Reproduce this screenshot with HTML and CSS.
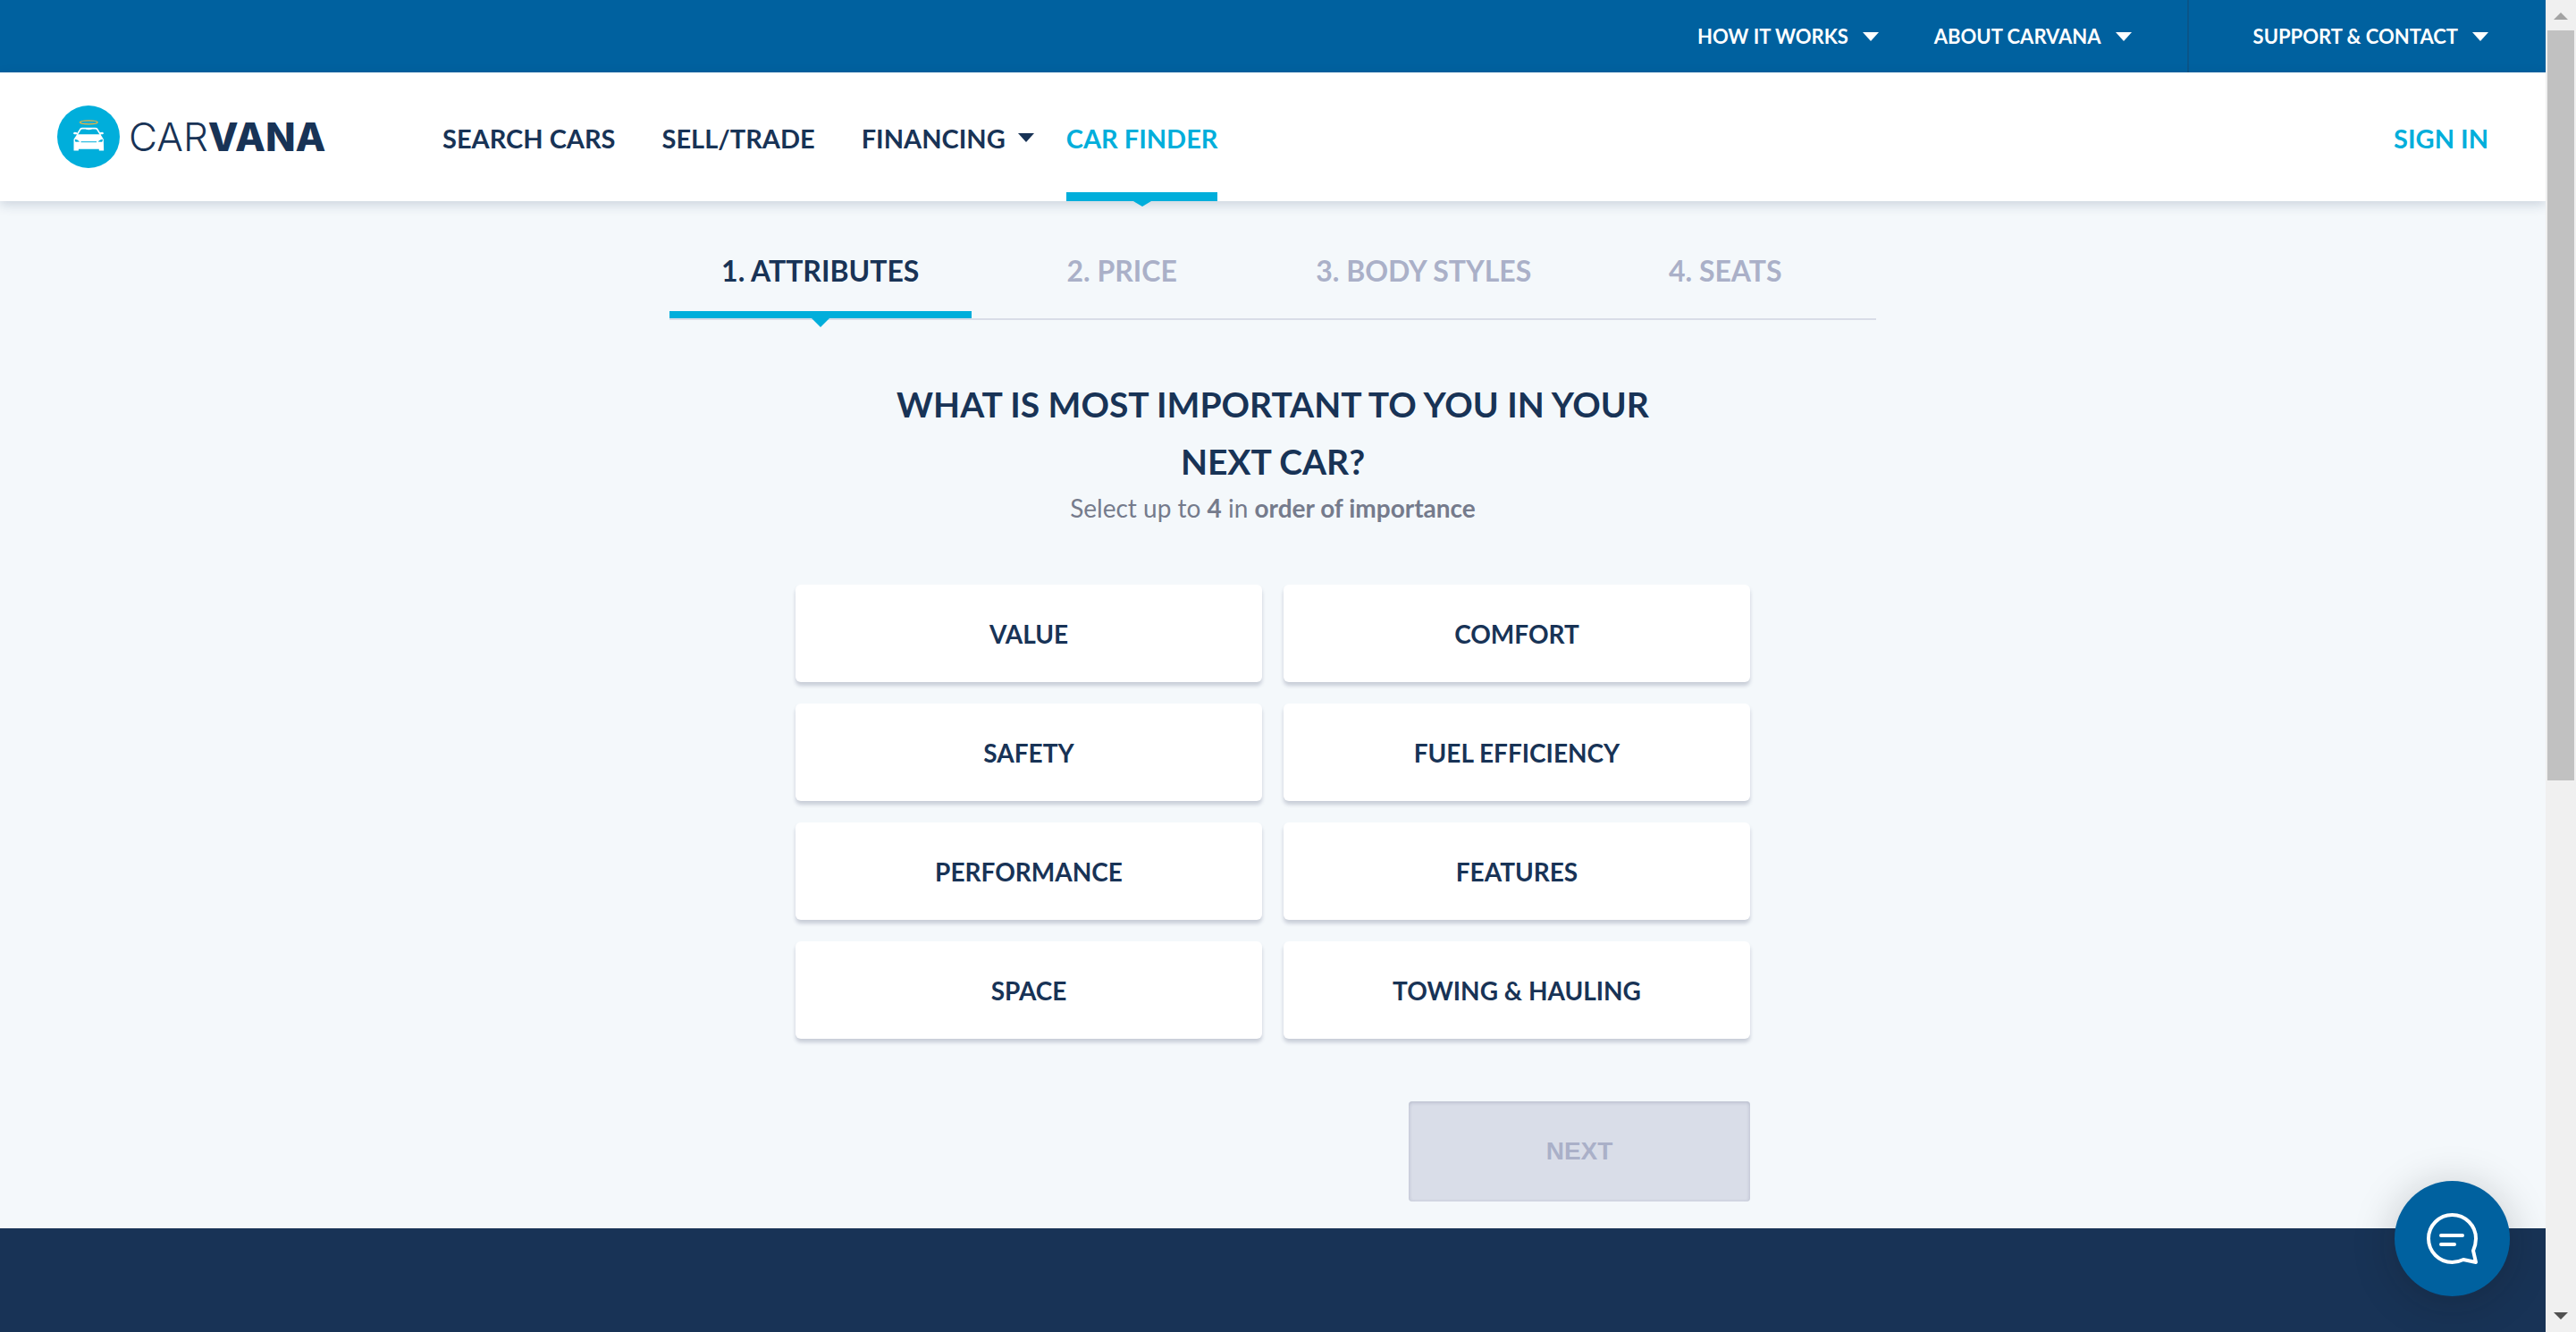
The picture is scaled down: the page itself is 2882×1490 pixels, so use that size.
FILE: index.html
```html
<!DOCTYPE html>
<html lang="en">
<head>
  <meta charset="utf-8">
  <title>Car Finder | Carvana</title>
  <meta name="viewport" content="width=device-width, initial-scale=1">
  <link rel="stylesheet" href="styles.css">
</head>
<body>
  <div class="page">
    <nav class="topbar" aria-label="Company">
      <a class="topbar-link" href="#how">HOW IT WORKS <span class="caret"></span></a>
      <a class="topbar-link" href="#about">ABOUT CARVANA <span class="caret"></span></a>
      <a class="topbar-link topbar-support" href="#support">SUPPORT &amp; CONTACT <span class="caret"></span></a>
    </nav>

    <header class="header">
      <a class="logo" href="#home">
        <svg class="logo-mark" viewBox="0 0 208 208" aria-hidden="true">
          <circle cx="104" cy="104" r="104" fill="#00aedb"/>
          <ellipse cx="105" cy="56" rx="29" ry="6" fill="none" stroke="#f2b33d" stroke-width="4"/>
          <path d="M66 97 L77 79 Q79 76 84 76 H126 Q131 76 133 79 L144 97" fill="none" stroke="#fff" stroke-width="5"/>
          <path d="M95 75h20v4q-10 4-20 0z" fill="#fff"/>
          <path d="M54 91q2-4 12-1l1 5q-8 2-13-1zM154 91q-2-4-12-1l-1 5q8 2 13-1z" fill="#fff"/>
          <path d="M66 96H144L154 112 155 150H139V145H71V150H55V112Z" fill="#fff"/>
          <path d="M59 112q8 0 16 8l-14 1q-3-4-2-9zM151 112q-8 0-16 8l14 1q3-4 2-9z" fill="#00aedb"/>
          <path d="M79 121H131" stroke="#00aedb" stroke-width="3"/>
        </svg>
        <span class="logo-text"><span class="logo-light">CAR</span><span class="logo-heavy">VANA</span></span>
      </a>
      <nav class="main-nav" aria-label="Main">
        <a class="nav-link" href="#search">SEARCH CARS</a>
        <a class="nav-link" href="#sell">SELL/TRADE</a>
        <a class="nav-link nav-menu" href="#financing">FINANCING <span class="caret"></span></a>
        <a class="nav-link nav-current" href="#finder" aria-current="page">CAR FINDER</a>
      </nav>
      <a class="sign-in" href="#sign-in">SIGN IN</a>
    </header>

    <main class="finder">
      <ol class="steps">
        <li class="step step-current" aria-current="step">1. ATTRIBUTES</li>
        <li class="step">2. PRICE</li>
        <li class="step">3. BODY STYLES</li>
        <li class="step">4. SEATS</li>
      </ol>
      <section class="question">
        <h1 class="question-title">WHAT IS MOST IMPORTANT TO YOU IN YOUR NEXT CAR?</h1>
        <p class="question-hint">Select up to <b>4</b> in <b>order of importance</b></p>
        <div class="options">
          <button class="option" type="button">VALUE</button>
          <button class="option" type="button">COMFORT</button>
          <button class="option" type="button">SAFETY</button>
          <button class="option" type="button">FUEL EFFICIENCY</button>
          <button class="option" type="button">PERFORMANCE</button>
          <button class="option" type="button">FEATURES</button>
          <button class="option" type="button">SPACE</button>
          <button class="option" type="button">TOWING &amp; HAULING</button>
        </div>
        <button class="next" type="button" disabled>NEXT</button>
      </section>
    </main>

    <footer class="footer"></footer>
  </div>

  <div class="scrollbar" aria-hidden="true">
    <span class="scroll-arrow scroll-up"></span>
    <span class="scroll-track"><span class="scroll-thumb"></span></span>
    <span class="scroll-arrow scroll-down"></span>
  </div>

  <button class="chat" type="button" aria-label="Chat with us">
    <svg class="chat-icon" viewBox="0 0 58 58" fill="none" stroke="#fff" stroke-width="4" stroke-linecap="round" stroke-linejoin="round" aria-hidden="true">
      <path d="M41 52Q35 55 28.500 55A26.500 26.500 0 1 1 55 28.500Q55 35 52 42L55 55Z"/>
      <path d="M16 25H40M16 35H31"/>
    </svg>
  </button>
</body>
</html>
```
FILE: styles.css
```css
:root {
  --blue: #00619f;
  --cyan: #00aedb;
  --navy: #183356;
  --muted: #aab0c8;
  --line: #d9dde8;
  --surface: #f4f8fb;
}

* {
  box-sizing: border-box;
}

body {
  margin: 0;
  display: flex;
  min-height: 100vh;
  background: var(--surface);
  color: var(--navy);
  font-family: Lato, "Liberation Sans", sans-serif;
  font-size: 28px;
  font-weight: 700;
}

a {
  color: inherit;
  text-decoration: none;
}

button {
  font: inherit;
  border: 0;
}

.page {
  flex: 1;
  min-width: 0;
  display: flex;
  flex-direction: column;
}

.caret {
  border: 9px solid transparent;
  border-top: 10px solid currentColor;
  border-bottom: 0;
}

/* Top bar */
.topbar {
  display: flex;
  justify-content: flex-end;
  height: 81px;
  padding-right: 64px;
  background: var(--blue);
  color: #fff;
  font-size: 22px;
}

.topbar-link {
  display: flex;
  align-items: center;
  gap: 16px;
  margin-left: 62px;
}

.topbar-support {
  padding-left: 72px;
  border-left: 2px solid #0a5589;
}

/* Header */
.header {
  position: relative;
  display: flex;
  align-items: stretch;
  height: 144px;
  padding: 0 64px;
  background: #fff;
  box-shadow: 0 4px 12px rgba(24, 51, 86, 0.18);
  font-size: 29px;
}

.logo {
  display: flex;
  align-items: center;
  gap: 10px;
  width: 431px;
}

.logo-mark {
  width: 70px;
  height: 70px;
}

.logo-text {
  font-family: Inter, "Liberation Sans", sans-serif;
  font-size: 44px;
}

.logo-light {
  font-weight: 300;
}

.logo-heavy {
  font-weight: 800;
}

.main-nav {
  display: flex;
  gap: 52px;
}

.nav-link,
.sign-in {
  display: flex;
  align-items: center;
  gap: 14px;
  padding-top: 2px;
}

.nav-menu {
  margin-right: -16px;
}

.nav-current {
  position: relative;
  color: var(--cyan);
}

.nav-current::before {
  content: "";
  position: absolute;
  inset: auto 0 0;
  height: 10px;
  background: var(--cyan);
}

.nav-current::after,
.step-current::after {
  content: "";
  position: absolute;
  top: 100%;
  left: 50%;
  margin-left: -10px;
  border: 10px solid transparent;
  border-top-color: var(--cyan);
  border-bottom: 0;
}

.nav-current::after {
  border-top-width: 6px;
}

.sign-in {
  margin-left: auto;
  color: var(--cyan);
}

/* Steps */
.finder {
  padding: 44px 24px 30px;
}

.steps {
  display: grid;
  grid-template-columns: repeat(4, 1fr);
  max-width: 1350px;
  margin: 0 auto;
  padding: 0;
  list-style: none;
  border-bottom: 2px solid var(--line);
  color: var(--muted);
  font-size: 32px;
  line-height: 68px;
  text-align: center;
}

.step {
  position: relative;
  padding-bottom: 11px;
  border-bottom: 8px solid transparent;
}

.step-current {
  color: var(--navy);
  border-color: var(--cyan);
}

.step-current::after {
  margin-top: 8px;
}

/* Question */
.question {
  max-width: 1068px;
  margin: 0 auto;
  padding-top: 62px;
  text-align: center;
}

.question-title {
  max-width: 900px;
  margin: 0 auto;
  font-size: 39px;
  line-height: 64px;
}

.question-hint {
  margin: 0;
  color: #757b8c;
  font-weight: 400;
  line-height: 40px;
}

.options {
  display: grid;
  grid-template-columns: 1fr 1fr;
  gap: 24px;
  margin-top: 66px;
}

.option {
  height: 109px;
  border-radius: 6px;
  background: #fff;
  color: var(--navy);
  box-shadow: 0 4px 4px rgba(24, 36, 76, 0.2);
}

.next {
  display: block;
  width: 382px;
  height: 112px;
  margin: 70px 0 0 auto;
  border-radius: 4px;
  background: var(--line);
  box-shadow: inset 0 1px 4px rgba(24, 36, 76, 0.2);
  color: var(--muted);
  font-family: "Liberation Sans", Arial, sans-serif;
}

.footer {
  flex: 1;
  background: var(--navy);
}

/* Chat launcher */
.chat {
  position: fixed;
  right: 74px;
  bottom: 40px;
  display: grid;
  place-items: center;
  width: 129px;
  height: 129px;
  padding: 0;
  border-radius: 50%;
  background: var(--blue);
  box-shadow: 0 6px 48px rgba(20, 20, 20, 0.22);
}

.chat-icon {
  width: 58px;
  height: 58px;
}

/* Scrollbar */
.scrollbar {
  position: sticky;
  top: 0;
  z-index: 1;
  display: flex;
  flex-direction: column;
  align-items: center;
  width: 34px;
  height: 100vh;
  background: #f0f0f0;
}

.scroll-arrow {
  border: 8px solid transparent;
}

.scroll-up {
  margin: 14px 0 12px;
  border-top: 0;
  border-bottom-color: #a3a3a3;
}

.scroll-down {
  margin: 12px 0 14px;
  border-bottom: 0;
  border-top-color: #505050;
}

.scroll-track {
  flex: 1;
  width: 30px;
}

.scroll-thumb {
  display: block;
  height: 59%;
  background: #c1c1c1;
}
```
